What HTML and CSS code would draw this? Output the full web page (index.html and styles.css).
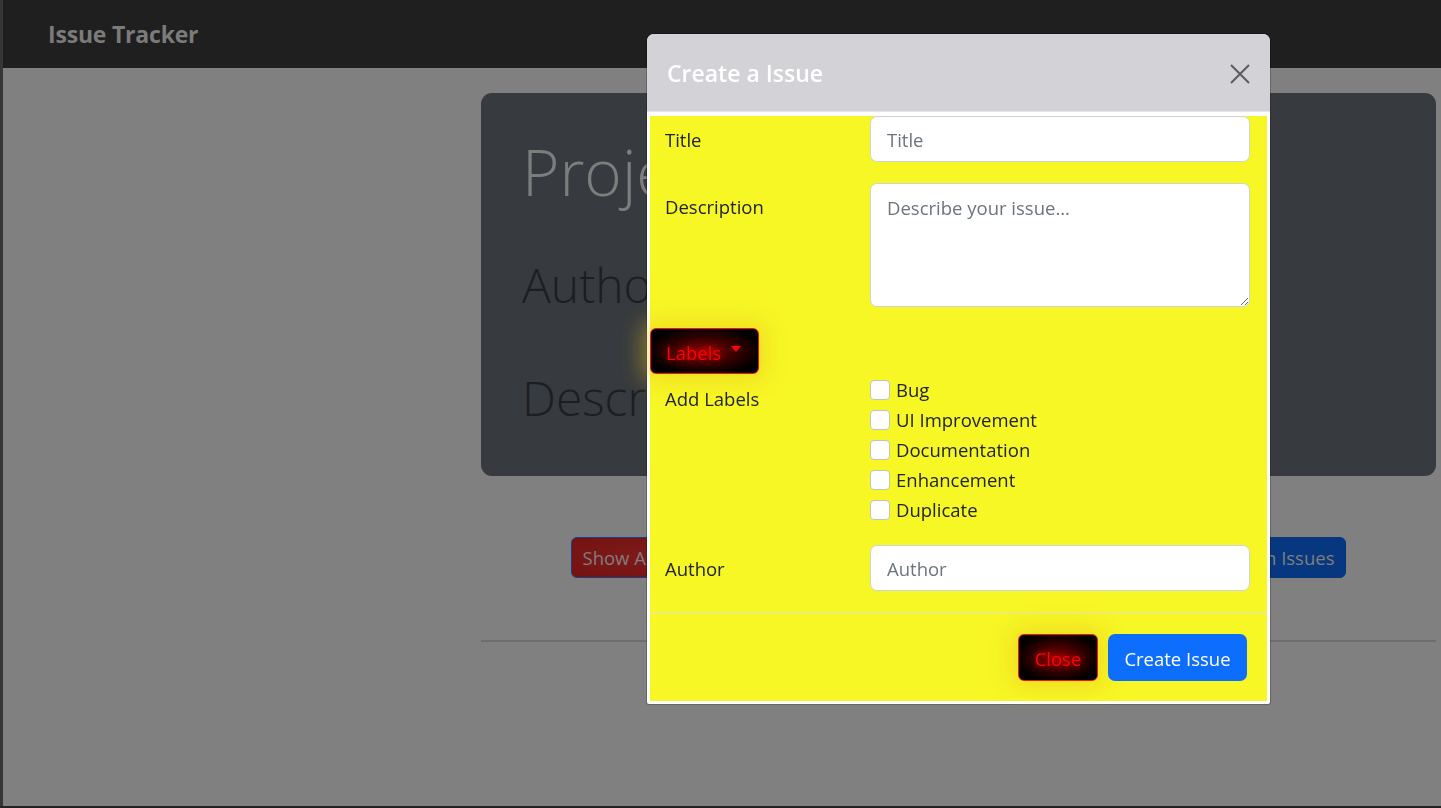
FILE: index.html
```html
<!DOCTYPE html>
<html lang="en">
<head>
<meta charset="utf-8">
<title>Issue Tracker</title>
<link rel="stylesheet" href="styles.css">
</head>
<body>
<div class="frame">
  <nav class="navbar">
    <span class="brand">Issue Tracker</span>
  </nav>
  <div class="page">
    <aside class="sidebar"></aside>
    <main class="main">
      <section class="jumbo">
        <h1 class="jumbo-title">Project</h1>
        <h2 class="jumbo-line jumbo-author">Author</h2>
        <h2 class="jumbo-line jumbo-desc">Description</h2>
      </section>
      <div class="actions">
        <button class="btn-bg btn-bg-red">Show All Issues</button>
        <button class="btn-bg btn-bg-blue">Filter Issues</button>
        <button class="btn-bg btn-bg-blue">Show Open Issues</button>
      </div>
      <hr class="rule">
    </main>
  </div>
</div>

<div class="modal">
  <div class="modal-header">
    <h5 class="modal-title">Create a Issue</h5>
    <button class="close-x" aria-label="Close">
      <svg width="22" height="22" viewBox="0 0 22 22"><path d="M2 2 L20 20 M20 2 L2 20" stroke="#5b5b5e" stroke-width="2" fill="none"/></svg>
    </button>
  </div>
  <form class="modal-body">
    <div class="form-row">
      <label class="form-label">Title</label>
      <input class="form-input" type="text" placeholder="Title">
    </div>
    <div class="form-row">
      <label class="form-label">Description</label>
      <textarea class="form-input form-textarea" placeholder="Describe your issue..."></textarea>
    </div>
    <button type="button" class="glow-btn labels-btn">Labels<span class="caret"></span></button>
    <div class="form-row form-row-checks">
      <label class="form-label">Add Labels</label>
      <div class="checks">
        <label class="check"><input type="checkbox"><span>Bug</span></label>
        <label class="check"><input type="checkbox"><span>UI Improvement</span></label>
        <label class="check"><input type="checkbox"><span>Documentation</span></label>
        <label class="check"><input type="checkbox"><span>Enhancement</span></label>
        <label class="check"><input type="checkbox"><span>Duplicate</span></label>
      </div>
    </div>
    <div class="form-row form-row-last">
      <label class="form-label">Author</label>
      <input class="form-input" type="text" placeholder="Author">
    </div>
    <div class="modal-footer">
      <button type="button" class="glow-btn close-btn">Close</button>
      <button type="button" class="create-btn">Create Issue</button>
    </div>
  </form>
</div>
</body>
</html>
```

FILE: styles.css
```css
* { box-sizing: border-box; }

html, body {
  margin: 0;
  padding: 0;
  height: 100%;
}

body {
  background: #232323;
  font-family: "Open Sans", "Noto Sans", sans-serif;
  font-size: 18.5px;
  line-height: 1.5;
  color: #212529;
  overflow: hidden;
}

.frame {
  margin-left: 3px;
  height: 806px;
  background: #808080;
  display: flex;
  flex-direction: column;
  box-shadow: -3px 0 0 #363636;
}

.navbar {
  height: 68px;
  background: #201f20;
  display: flex;
  align-items: center;
  padding-left: 45px;
  flex-shrink: 0;
}

.brand {
  color: #7b7b7b;
  font-weight: 700;
  font-size: 23px;
  letter-spacing: -0.2px;
}

.page {
  display: flex;
  flex: 1;
}

.sidebar {
  width: 478px;
  flex-shrink: 0;
}

.main {
  flex: 1;
  margin-right: 5px;
  padding-top: 25px;
}

.jumbo {
  height: 383px;
  background: #373a3e;
  border-radius: 11px;
  padding: 41px 41px 0;
  overflow: hidden;
  white-space: nowrap;
}

.jumbo-title {
  margin: 0;
  font-weight: 300;
  font-size: 64px;
  line-height: 1.2;
  color: #7d7d7d;
}

.jumbo-line {
  font-weight: 300;
  font-size: 48px;
  line-height: 1.2;
  color: #1c1e21;
}

.jumbo-author {
  margin: 45px 0 0;
}

.jumbo-desc {
  margin: 56px 0 0;
}

.actions {
  width: 776px;
  margin: 61px auto 0;
  display: flex;
  justify-content: space-between;
}

.btn-bg {
  height: 41px;
  padding: 0 11px;
  border-radius: 6px;
  font-family: inherit;
  font-size: 18.5px;
  color: #7e7e7e;
  border: 1px solid transparent;
  white-space: nowrap;
}

.btn-bg-red {
  background: radial-gradient(ellipse at center, #7e1a1a 0%, #741212 100%);
  border-color: #163f86;
}

.btn-bg-blue {
  background: #07387f;
  border-color: #07387f;
}

.rule {
  margin: 62px 0 0;
  border: 0;
  border-top: 2px solid #6e6e6e;
}

/* Modal */
.modal {
  position: fixed;
  left: 647px;
  top: 34px;
  width: 623px;
  background: #fff;
  border-radius: 7px 7px 2px 2px;
  box-shadow: 0 0 0 1px rgba(0, 0, 0, 0.2);
}

.modal-header {
  height: 78px;
  background: #d3d2d6;
  border-radius: 7px 7px 0 0;
  display: flex;
  align-items: center;
  justify-content: space-between;
  padding: 3px 19px 0 20px;
  border-bottom: 1px solid #e6e6ea;
}

.modal-title {
  margin: 0;
  color: #fff;
  font-size: 23px;
  font-weight: 600;
  line-height: 1.2;
}

.close-x {
  border: 0;
  background: transparent;
  padding: 0;
  width: 22px;
  height: 22px;
  display: flex;
}

.modal-body {
  display: block;
  margin: 4px 3px 3px;
  background: #f7f725;
}

.form-row {
  display: grid;
  grid-template-columns: 205px 1fr;
  padding: 0 17px 0 15px;
  margin-bottom: 21px;
}

.form-label {
  padding-top: 10px;
  line-height: 28px;
  color: #212529;
}

.form-input {
  display: block;
  width: 100%;
  height: 46px;
  padding: 7px 16px;
  border: 1px solid #cfd3d8;
  border-radius: 7px;
  background: #fff;
  font-family: inherit;
  font-size: 18.5px;
  line-height: 28px;
  color: #212529;
  outline: none;
}

.form-input::placeholder {
  color: #6c757d;
}

.form-textarea {
  height: 124px;
  padding-top: 10px;
  resize: vertical;
}

.glow-btn {
  border: 1px solid #ff1010;
  border-radius: 6px;
  background: radial-gradient(ellipse at center, #8a0000 0%, #3a0000 40%, #000 78%);
  color: #ff0000;
  font-family: inherit;
  font-size: 18.5px;
  text-shadow: 0 0 6px rgba(255, 0, 0, 0.8);
  box-shadow: 0 0 22px 8px rgba(232, 196, 30, 0.45);
}

.labels-btn {
  height: 46px;
  width: 109px;
  padding: 2px 0 0 15px;
  display: flex;
  align-items: center;
  margin: 0;
}

.caret {
  display: inline-block;
  margin-left: 10px;
  margin-top: -7px;
  border-top: 6px solid #ff0000;
  border-left: 5.5px solid transparent;
  border-right: 5.5px solid transparent;
}

.form-row-checks {
  margin-top: 1px;
  margin-bottom: 20px;
}

.checks {
  display: flex;
  flex-direction: column;
}

.check {
  display: flex;
  align-items: center;
  height: 30px;
  gap: 6px;
}

.check input {
  appearance: none;
  -webkit-appearance: none;
  margin: 0;
  width: 20px;
  height: 20px;
  background: #fff;
  border: 1px solid #c3c3c3;
  border-radius: 4px;
}

.form-row-last {
  margin-bottom: 0;
  padding-bottom: 21px;
}

.modal-footer {
  border-top: 1px solid #e2e2d0;
  display: flex;
  justify-content: flex-end;
  gap: 10px;
  padding: 21px 20px 20px;
}

.close-btn {
  height: 47px;
  width: 80px;
  padding: 2px 0 0;
}

.create-btn {
  height: 47px;
  width: 139px;
  padding: 2px 0 0;
  border: 0;
  border-radius: 7px;
  background: #0d6efd;
  color: #fff;
  font-family: inherit;
  font-size: 18.5px;
}
```
